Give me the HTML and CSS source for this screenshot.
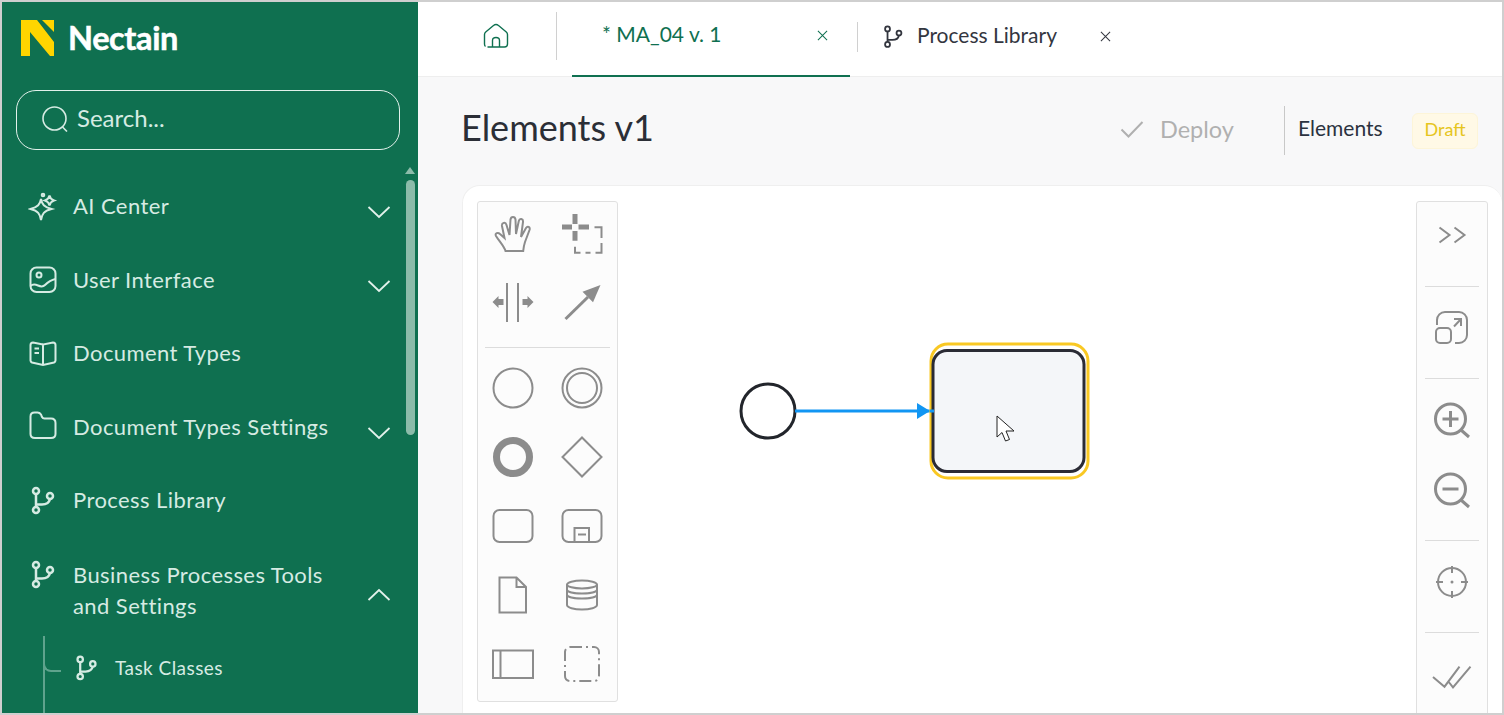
FILE: index.html
```html
<!DOCTYPE html>
<html lang="en">
<head>
    <meta charset="UTF-8">
    <title>Nectain</title>
    <link rel="stylesheet" href="styles.css">
</head>
<body>
<div class="app">
    <aside class="sidebar">
        <div class="logo">
            <svg class="logo-mark" viewBox="0 0 34 36"><path d="M0 0H16L33 22V36H29L9 12V36H0Z"/><path d="M21 0H33V12Z"/></svg>
            <span class="logo-text">Nectain</span>
        </div>
        <div class="search">
            <svg class="ico-search" viewBox="0 0 26 26"><circle cx="12.5" cy="12.5" r="11.5"/><path d="M20.5 21L25 25.5"/></svg>
            <span class="search-text">Search...</span>
        </div>
        <div class="scroll-up"></div>
        <div class="scroll-thumb"></div>
        <ul class="nav">
            <li class="nav-item">
                <svg class="nav-ico" viewBox="0 0 30 30"><path d="M13 8C14 13.500 16 16 23.500 18 16 20 14 22.500 13 29 12 22.500 10 20 2.500 18 10 16 12 13.500 13 8Z"/><path d="M21.500 4.500C22 7 23 8.500 26 9.500 23 10.500 22 12 21.500 14.500 21 12 20 10.500 17 9.500 20 8.500 21 7 21.500 4.500Z"/><circle cx="15" cy="4" r="1.300"/></svg>
                <span class="nav-label">AI Center</span>
                <svg class="chev" viewBox="0 0 24 14"><path d="M1.500 2L12 12 22.500 2"/></svg>
            </li>
            <li class="nav-item">
                <svg class="nav-ico" viewBox="0 0 30 30"><rect x="2.500" y="3.500" width="25" height="24.500" rx="6"/><circle cx="11" cy="11" r="2.500"/><path d="M2.500 22C8 17 12 26 17 21 20 18 23 16 27.500 15"/></svg>
                <span class="nav-label">User Interface</span>
                <svg class="chev" viewBox="0 0 24 14"><path d="M1.500 2L12 12 22.500 2"/></svg>
            </li>
            <li class="nav-item">
                <svg class="nav-ico" viewBox="0 0 30 30"><path d="M15 6.500L5 4.500C3.500 4.500 2.500 5.500 2.500 7V22.500C2.500 23.500 3 24 4 24.500L15 27 26 24.500C27 24 27.500 23.500 27.500 22.500V7C27.500 5.500 26.500 4.500 25 4.500L15 6.500V27"/><path d="M6.500 10.500H11M6.500 15H11"/></svg>
                <span class="nav-label">Document Types</span>
            </li>
            <li class="nav-item">
                <svg class="nav-ico" viewBox="0 0 30 30"><path d="M2.500 5.500C2.500 3 4 1.500 6.500 1.500H9.500C11 1.500 12 2 13 3.500L14 6C14.500 7 15.500 7.500 16.500 7.500H23C26 7.500 27.500 9 27.500 12V23C27.500 25.500 26 27 23 27H7C4 27 2.500 25.500 2.500 23Z"/></svg>
                <span class="nav-label">Document Types Settings</span>
                <svg class="chev" viewBox="0 0 24 14"><path d="M1.500 2L12 12 22.500 2"/></svg>
            </li>
            <li class="nav-item">
                <svg class="nav-ico branch" viewBox="0 0 30 30"><circle cx="8" cy="6" r="3"/><circle cx="8" cy="25" r="3"/><circle cx="22" cy="11" r="3"/><path d="M8 9V22M8 19.500H14C18 19.500 21 18.500 22 14"/></svg>
                <span class="nav-label">Process Library</span>
            </li>
            <li class="nav-item nav-open">
                <svg class="nav-ico branch" viewBox="0 0 30 30"><circle cx="8" cy="6" r="3"/><circle cx="8" cy="25" r="3"/><circle cx="22" cy="11" r="3"/><path d="M8 9V22M8 19.500H14C18 19.500 21 18.500 22 14"/></svg>
                <span class="nav-label">Business Processes Tools and Settings</span>
                <svg class="chev" viewBox="0 0 24 14"><path d="M1.500 12L12 2 22.500 12"/></svg>
            </li>
        </ul>
        <ul class="subnav">
            <li class="sub-item">
                <svg class="sub-ico branch" viewBox="0 0 30 30"><circle cx="8" cy="6" r="3"/><circle cx="8" cy="25" r="3"/><circle cx="22" cy="11" r="3"/><path d="M8 9V22M8 19.500H14C18 19.500 21 18.500 22 14"/></svg>
                <span>Task Classes</span>
            </li>
        </ul>
    </aside>

    <main class="main">
        <div class="tabs">
            <div class="tab-home">
                <svg class="home-ico" viewBox="0 0 26 26"><path d="M2.500 23.500C1.800 23 1.500 22.300 1.500 21V11.500C1.500 10.300 2 9.500 3 8.700L10.500 2.500C12 1.300 14 1.300 15.500 2.500L23 8.700C24 9.500 24.500 10.300 24.500 11.500V21C24.500 22.800 23.500 24 21.500 24H4.500"/><path d="M9.500 24V17.500C9.500 15.500 11 14.500 13 14.500S16.500 15.500 16.500 17.500V24"/></svg>
            </div>
            <div class="tab tab-active">
                <span>* MA_04 v. 1</span>
                <svg class="tab-x" viewBox="0 0 12 12"><path d="M1 1L11 11M11 1L1 11"/></svg>
            </div>
            <div class="tab tab-second">
                <svg class="tab-ico" viewBox="0 0 30 30"><circle cx="8" cy="6" r="3"/><circle cx="8" cy="25" r="3"/><circle cx="22" cy="11" r="3"/><path d="M8 9V22M8 19.500H14C18 19.500 21 18.500 22 14"/></svg>
                <span>Process Library</span>
                <svg class="tab-x" viewBox="0 0 12 12"><path d="M1 1L11 11M11 1L1 11"/></svg>
            </div>
        </div>

        <div class="page-head">
            <h1>Elements v1</h1>
            <div class="deploy">
                <svg class="deploy-ico" viewBox="0 0 24 18"><path d="M1.500 9.500L8.500 16.500 22.500 2"/></svg>
                <span>Deploy</span>
            </div>
            <div class="head-name">Elements</div>
            <div class="badge">Draft</div>
        </div>

        <div class="canvas">
            <div class="palette">
                <div class="tool-grid tool-grid-top">
                    <svg class="tool" viewBox="-24 -24 48 48"><path d="M-7.500 17C-9 12-14 7-17 2-18.500 -1-15 -2-13 0L-8.500 4-11 -8C-11.500 -11.500-7.500 -12.500-6.500 -9L-3.500 1-2.500 -14.500C-2 -18 2 -18 2.500 -14.500L3 0 5.800 -13C6.500 -16 10.500 -15.500 10 -12L8 3 13 -6C14.500 -8.500 17.500 -7 16.500 -4L12 8C11 11 10.500 14 10.200 17Z"/></svg>
                    <svg class="tool" viewBox="-24 -24 48 48"><path class="fat" d="M-7 -20V-10M-7 -3V6.700M-20 -7H-10M-3.500 -7H7"/><path d="M12.500 -6.700H19.500V4M19.500 9V18.700H13.500M8.500 18.700H3.500M-1.500 18.700H-7V12.700"/></svg>
                    <svg class="tool" viewBox="-24 -24 48 48"><path d="M-6 -19V20M5 -19V20"/><path class="solid" d="M-20.500 0L-14.500 -6V-3H-9.500V3H-14.500V6ZM20.500 0L14.500 -6V-3H9.500V3H14.500V6Z"/></svg>
                    <svg class="tool" viewBox="-24 -24 48 48"><path class="mid" d="M-16.500 17L6 -5"/><path class="solid" d="M18.500 -17L.5 -10.300 11 .3Z"/></svg>
                </div>
                <div class="tool-grid">
                    <svg class="tool" viewBox="-24 -24 48 48"><circle r="19.500"/></svg>
                    <svg class="tool" viewBox="-24 -24 48 48"><circle r="19.500"/><circle r="15"/></svg>
                    <svg class="tool" viewBox="-24 -24 48 48"><circle class="thick" r="16.500"/></svg>
                    <svg class="tool" viewBox="-24 -24 48 48"><path d="M0 -19.500L19.500 0 0 19.500 -19.500 0Z"/></svg>
                    <svg class="tool" viewBox="-24 -24 48 48"><rect x="-19.500" y="-16" width="39" height="32" rx="6"/></svg>
                    <svg class="tool" viewBox="-24 -24 48 48"><rect x="-19.500" y="-16" width="39" height="32" rx="6"/><path d="M-7.500 16V2H7V16M-4 8.500H4"/></svg>
                    <svg class="tool" viewBox="-24 -24 48 48"><path d="M-13.500 -17.500H3.500L13 -8V17.500H-13.500ZM3.500 -17.500V-8H13"/></svg>
                    <svg class="tool" viewBox="-24 -24 48 48"><ellipse cy="-10.500" rx="15" ry="4"/><path d="M-15 -10.500V10C-15 12.500-8 14.500 0 14.500S15 12.500 15 10V-10.500M-15 -5.500C-15 -3-8 -1.500 0 -1.500S15 -3 15 -5.500M-15 -.5C-15 2-8 3.500 0 3.500S15 2 15 -.5"/></svg>
                    <svg class="tool" viewBox="-24 -24 48 48"><rect x="-20" y="-13.500" width="40" height="27.500"/><path d="M-12.500 -13.500V14"/></svg>
                    <svg class="tool" viewBox="-24 -24 48 48"><rect x="-17" y="-17" width="34" height="34" rx="5" stroke-dasharray="12 4 2 4"/></svg>
                </div>
            </div>

            <div class="diagram">
                <svg class="diagram-svg" viewBox="618 201 798 500">
                    <circle class="d-start" cx="768" cy="411" r="27"/>
                    <path class="d-flow" d="M795 411H934"/>
                    <path class="d-arrow" d="M930 411L917 403V419Z"/>
                    <rect class="d-select" x="931" y="344" width="157" height="134" rx="17"/>
                    <rect class="d-task" x="933" y="350.500" width="151" height="121" rx="14"/>
                    <path class="d-flow" d="M930 411H934"/>
                    <path class="d-cursor" d="M997 416V437L1002 432.500 1005.500 441 1009.500 439.500 1006 431H1014Z"/>
                </svg>
            </div>

            <div class="rail">
                <div class="rail-part rail-first">
                    <svg class="tool" viewBox="-24 -24 48 48"><path d="M-12.500 -7.500L-2.500 0 -12.500 7.500M2.500 -7.500L12.500 0 2.500 7.500"/></svg>
                </div>
                <div class="rail-part">
                    <svg class="tool" viewBox="-24 -24 48 48"><path d="M-15 -3V-8A8 8 0 0 1 -7 -16H7A8 8 0 0 1 15 -8V7A8 8 0 0 1 7 15H3"/><rect x="-16" y="0" width="15" height="15" rx="4"/><path d="M2 -1.500L9 -9M2 -9H9V-2"/></svg>
                </div>
                <div class="rail-part rail-zoom">
                    <svg class="tool" viewBox="-24 -24 48 48"><circle class="mid" cx="-1.500" cy="-1" r="15"/><path class="mid" d="M9 10L17 17M-1.500 -9V7M-9.500 -1H6.500"/></svg>
                    <svg class="tool" viewBox="-24 -24 48 48"><circle class="mid" cx="-1.500" cy="-1" r="15"/><path class="mid" d="M9 10L17 17M-9.500 -1H6.500"/></svg>
                </div>
                <div class="rail-part">
                    <svg class="tool" viewBox="-24 -24 48 48"><circle r="14"/><path d="M0 -16V-9M0 9V16M-16 0H-9M9 0H16"/><circle class="solid" r="1.500"/></svg>
                </div>
                <div class="rail-part rail-last">
                    <svg class="tool" viewBox="-24 -24 48 48"><path d="M-19 -1L-7.500 8.700 7.500 -11.300M-4 3L1 9.300 18.500 -11.300"/></svg>
                </div>
            </div>
        </div>
    </main>
</div>
</body>
</html>
```

FILE: styles.css
```css
* {
    box-sizing: border-box;
}

html,
body {
    margin: 0;
    padding: 0;
}

body {
    font-family: "Lato", "Liberation Sans", sans-serif;
    overflow: hidden;
}

ul {
    margin: 0;
    padding: 0;
    list-style: none;
}

.app {
    width: 1504px;
    height: 715px;
    display: flex;
    border: 2px solid #cfcfcf;
    overflow: hidden;
}

/* sidebar */
.sidebar {
    position: relative;
    width: 416px;
    flex: none;
    background: #0f7050;
    color: #d6ebe3;
    overflow: hidden;
}

.logo {
    height: 88px;
    display: flex;
    align-items: center;
    padding: 0 0 16px 19px;
}

.logo-mark {
    width: 34px;
    height: 36px;
    fill: #ffd500;
}

.logo-text {
    margin: -2px 0 0 13px;
    font-size: 32.5px;
    font-weight: 700;
    letter-spacing: -0.4px;
    color: #fff;
    -webkit-text-stroke: 0.5px #fff;
}

.search {
    height: 60px;
    margin: 0 18px 0 14px;
    display: flex;
    align-items: center;
    padding: 0 0 2px 25px;
    border: 1px solid #e2f1eb;
    border-radius: 20px;
    font-size: 24px;
}

.search-text {
    padding-bottom: 3px;
}

.ico-search {
    width: 26px;
    height: 26px;
    margin-right: 9px;
    fill: none;
    stroke: #d6ebe3;
    stroke-width: 1.6;
}

.scroll-up {
    position: absolute;
    left: 403px;
    top: 165px;
    width: 0;
    height: 0;
    border-left: 5px solid transparent;
    border-right: 5px solid transparent;
    border-bottom: 7px solid #8cbcaa;
}

.scroll-thumb {
    position: absolute;
    left: 404px;
    top: 178px;
    width: 9px;
    height: 255px;
    border-radius: 5px;
    background: #8cbcaa;
}

.nav {
    margin-top: 19px;
}

.nav-item {
    position: relative;
    height: 73.5px;
    display: flex;
    align-items: center;
    padding-left: 26px;
    font-size: 22px;
    letter-spacing: 0.42px;
}

.nav-ico {
    width: 30px;
    height: 30px;
    flex: none;
    fill: none;
    stroke: #d6ebe3;
    stroke-width: 2;
}

.nav-ico.branch,
.sub-ico.branch {
    stroke-width: 2.5;
}

.nav-label {
    margin-left: 15px;
    line-height: 31px;
}

.chev {
    position: absolute;
    left: 365px;
    top: 36px;
    width: 24px;
    height: 14px;
    fill: none;
    stroke: #e2f1eb;
    stroke-width: 1.8;
}

.nav-open {
    height: 106px;
    align-items: flex-start;
    padding-top: 22px;
}

.nav-open .nav-label {
    width: 270px;
}

.nav-open .chev {
    top: 51px;
}

.subnav {
    position: relative;
    height: 80px;
}

.subnav::before {
    content: "";
    position: absolute;
    left: 41px;
    top: -7px;
    bottom: 0;
    width: 2px;
    background: #5fa38d;
}

.sub-item {
    position: relative;
    height: 49px;
    display: flex;
    align-items: center;
    padding-left: 70.5px;
    font-size: 19px;
    letter-spacing: 0.45px;
}

.sub-item::before {
    content: "";
    position: absolute;
    left: 43px;
    top: 19px;
    width: 16px;
    height: 8px;
    border-bottom: 2px solid #5fa38d;
    border-left: 2px solid #5fa38d;
    border-bottom-left-radius: 8px;
    margin-left: -2px;
}

.sub-ico {
    width: 27px;
    height: 27px;
    margin-right: 15.5px;
    fill: none;
    stroke: #d6ebe3;
}

/* tabs */
.main {
    flex: 1;
    min-width: 0;
    display: flex;
    flex-direction: column;
    background: #f8f8f9;
}

.tabs {
    height: 75px;
    flex: none;
    display: flex;
    background: #fff;
    border-bottom: 1px solid #eeeeee;
}

.tab-home {
    width: 139px;
    height: 48px;
    margin-top: 10px;
    display: flex;
    align-items: center;
    justify-content: center;
    padding-left: 18px;
    border-right: 1px solid #d0d0d0;
}

.home-ico {
    width: 26px;
    height: 26px;
    fill: none;
    stroke: #0f7050;
    stroke-width: 1.4;
}

.tab {
    height: 75px;
    display: flex;
    align-items: center;
    padding-bottom: 10px;
    font-size: 21px;
}

.tab-active {
    width: 278px;
    margin-left: 15px;
    padding-left: 30px;
    color: #0f7050;
    border-bottom: 2px solid #0f7050;
}

.tab-active .tab-x {
    margin-left: auto;
    margin-right: 22px;
    stroke: #0f7050;
}

.tab-x {
    width: 11px;
    height: 11px;
    margin-top: 3px;
    fill: none;
    stroke: #33363f;
    stroke-width: 1.1;
}

.tab-second {
    position: relative;
    padding-left: 31px;
    color: #33363f;
}

.tab-second::before {
    content: "";
    position: absolute;
    left: 7px;
    top: 20px;
    width: 1px;
    height: 30px;
    background: #d0d0d0;
}

.tab-ico {
    width: 24.5px;
    height: 24.5px;
    margin: 3px 11.5px 0 0;
    fill: none;
    stroke: #33363f;
    stroke-width: 2.2;
}

.tab-second .tab-x {
    margin-left: 43px;
}

/* page head */
.page-head {
    height: 108px;
    flex: none;
    display: flex;
    align-items: center;
    padding: 0 24px 9px 43px;
}

.page-head h1 {
    margin: 0 auto 0 0;
    font-size: 36px;
    font-weight: 400;
    color: #2b2e36;
}

.deploy {
    display: flex;
    align-items: center;
    width: 165px;
    height: 49px;
    margin-top: 8px;
    padding-bottom: 4px;
    color: #b0b0b0;
    font-size: 23.5px;
    border-right: 1px solid #c8c8c8;
}

.deploy-ico {
    width: 24px;
    height: 18px;
    margin-right: 16px;
    fill: none;
    stroke: #b0b0b0;
    stroke-width: 2;
}

.head-name {
    margin: 2px 0 0 13px;
    width: 114px;
    font-size: 21px;
    color: #2b3240;
}

.badge {
    width: 66px;
    height: 36px;
    margin-top: 8px;
    padding-bottom: 3px;
    display: flex;
    align-items: center;
    justify-content: center;
    background: #fff9e6;
    border: 1px solid #fdf5d8;
    border-radius: 6px;
    color: #e6c520;
    font-size: 18px;
}

/* canvas */
.canvas {
    flex: 1;
    min-height: 0;
    margin-left: 44px;
    display: flex;
    align-items: flex-start;
    padding: 15px 14px 0 14px;
    background: #fff;
    border: 1px solid #efefef;
    border-right: 0;
    border-bottom: 0;
    border-radius: 18px 18px 0 0;
    overflow: hidden;
}

.palette {
    width: 141px;
    height: 501px;
    flex: none;
    background: #fcfcfc;
    border: 1px solid #e0e0e0;
    border-radius: 3px;
}

.tool-grid {
    display: grid;
    grid-template-columns: 69px 69px;
    grid-auto-rows: 48px;
    row-gap: 21px;
    justify-items: center;
    padding-top: 16px;
}

.tool-grid-top {
    row-gap: 20px;
    column-gap: 14px;
    margin: 0 7px;
    grid-template-columns: 55px 55px;
    padding: 8px 0 21px;
    border-bottom: 1px solid #dcdcdc;
}

.tool {
    width: 48px;
    height: 48px;
    fill: none;
    stroke: #8c8c8c;
    stroke-width: 2;
}

.tool .fat {
    stroke-width: 5;
}

.tool .mid {
    stroke-width: 3;
}

.tool .thick {
    stroke-width: 7;
}

.tool .solid {
    fill: #8c8c8c;
    stroke: none;
}

.diagram {
    flex: 1;
    height: 500px;
    min-width: 0;
}

.diagram-svg {
    display: block;
    width: 798px;
    height: 500px;
}

.d-start {
    fill: #fff;
    stroke: #22252b;
    stroke-width: 3;
}

.d-flow {
    fill: none;
    stroke: #1296f3;
    stroke-width: 3;
}

.d-arrow {
    fill: #1296f3;
}

.d-select {
    fill: none;
    stroke: #f9c823;
    stroke-width: 3;
}

.d-task {
    fill: #f4f6f9;
    stroke: #2a2b35;
    stroke-width: 3;
}

.d-cursor {
    fill: #fff;
    stroke: #222;
    stroke-width: 1;
}

.rail {
    width: 72px;
    flex: none;
    display: flex;
    flex-direction: column;
    padding-bottom: 40px;
    background: #fcfcfc;
    border: 1px solid #e0e0e0;
    border-radius: 3px 3px 0 0;
}

.rail-part {
    margin: 0 8px;
    padding: 17px 0 26px;
    display: flex;
    flex-direction: column;
    align-items: center;
    gap: 22px;
    border-bottom: 1px solid #dcdcdc;
}

.rail-first {
    padding: 9px 0 27px;
}

.rail-last {
    padding-top: 21px;
    border-bottom: 0;
}
```
